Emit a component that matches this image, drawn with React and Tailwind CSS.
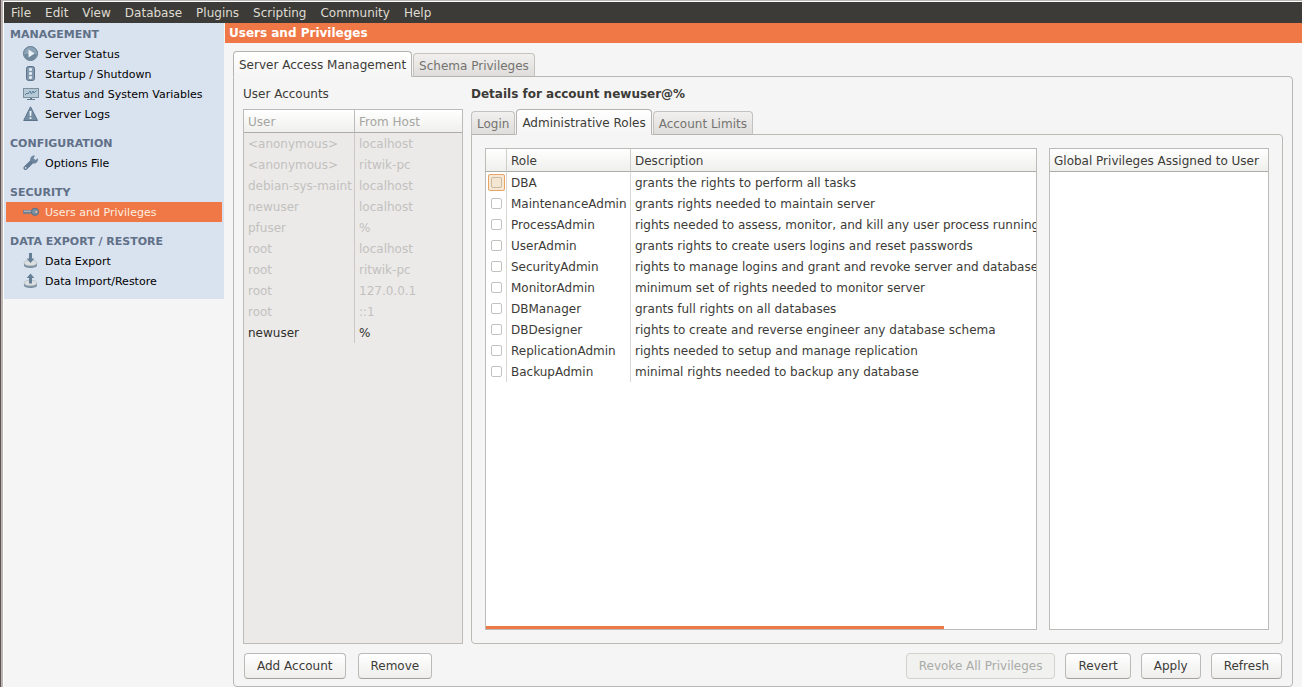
import React from 'react';
import clsx from 'clsx';

const MENUS = ['File', 'Edit', 'View', 'Database', 'Plugins', 'Scripting', 'Community', 'Help'];

const ICONS = {
  status: (
    <>
      <circle cx="7.500" cy="7.500" r="7" fill="#8ba3b5" stroke="#5f778c" />
      <path d="M1.500 8a6 6 0 0 0 12 0z" fill="#6f889c" />
      <path d="M5.500 3.500v8L11.500 7.500z" fill="#eaf2f8" />
    </>
  ),
  startup: (
    <>
      <rect x="3.500" y="0.500" width="8" height="14" rx="2" fill="#8298ac" stroke="#5c738b" />
      <rect x="6" y="2" width="3" height="3" rx="1" fill="#dfe9f1" />
      <rect x="6" y="6" width="3" height="3" rx="1" fill="#dfe9f1" />
      <rect x="6" y="10" width="3" height="3" rx="1" fill="#dfe9f1" />
    </>
  ),
  monitor: (
    <>
      <rect x="0.500" y="2.500" width="15" height="9" fill="#b5c9d6" stroke="#7b8f9f" />
      <path d="M2 9l2-2 1 1 2-3 1.500 3 1.500-3 1 2 2.500-2.500" fill="none" stroke="#5d7f99" />
      <path d="M7 12h2v1h3v1H4v-1h3z" fill="#64798c" />
    </>
  ),
  logs: (
    <>
      <path d="M7.500 .8L14.500 14.500H.7z" fill="#748da2" stroke="#5b748a" strokeLinejoin="round" />
      <path d="M6.500 5h2l-.3 5H6.800zM6.600 11.200h1.800V13H6.600z" fill="#edf4f9" />
    </>
  ),
  wrench: (
    <>
      <path d="M2.500 13L9 6.500" stroke="#637c95" strokeWidth="4" strokeLinecap="round" />
      <path d="M15 3.200L12.500 5l-2-1.700L12 .5C9.500 0 7 2 7.200 5l3 3.500c3 .4 5.300-2 4.800-5.300z" fill="#6d869e" />
      <circle cx="2.700" cy="12.800" r="0.900" fill="#d9e2ef" />
    </>
  ),
  key: (
    <>
      <path d="M0 6h9.500v3.500H6v.8H4.500v-.8H3v.8H1.500v-.8H0z" fill="#6f7f8d" />
      <path d="M1 7.200h9" stroke="#c3c6c8" />
      <circle cx="12" cy="7.800" r="3.600" fill="#7790a6" stroke="#586f85" />
      <circle cx="13.300" cy="7.800" r="1.100" fill="#f0b796" />
    </>
  ),
  export: (
    <>
      <path d="M1 10v2.500C1 14 4 15 7.500 15s6.500-1 6.500-2.500V10z" fill="#7b8fa0" />
      <ellipse cx="7.500" cy="10" rx="6.500" ry="2.800" fill="#dde0e0" stroke="#b3bcc2" strokeWidth="0.700" />
      <path d="M6 0h3v5.500h2.300L7.500 10 3.700 5.500H6z" fill="#647e95" />
    </>
  ),
  import: (
    <>
      <path d="M1 10v2.500C1 14 4 15 7.500 15s6.500-1 6.500-2.500V10z" fill="#7b8fa0" />
      <ellipse cx="7.500" cy="10" rx="6.500" ry="2.800" fill="#dde0e0" stroke="#b3bcc2" strokeWidth="0.700" />
      <path d="M6 10.500h3V5h2.300L7.500 .5 3.700 5H6z" fill="#647e95" />
    </>
  ),
};

const SECTIONS = [
  {
    title: 'MANAGEMENT',
    items: [
      ['status', 'Server Status'],
      ['startup', 'Startup / Shutdown'],
      ['monitor', 'Status and System Variables'],
      ['logs', 'Server Logs'],
    ],
  },
  { title: 'CONFIGURATION', items: [['wrench', 'Options File']] },
  { title: 'SECURITY', items: [['key', 'Users and Privileges']] },
  {
    title: 'DATA EXPORT / RESTORE',
    items: [
      ['export', 'Data Export'],
      ['import', 'Data Import/Restore'],
    ],
  },
];

const ACCOUNTS = [
  ['<anonymous>', 'localhost'],
  ['<anonymous>', 'ritwik-pc'],
  ['debian-sys-maint', 'localhost'],
  ['newuser', 'localhost'],
  ['pfuser', '%'],
  ['root', 'localhost'],
  ['root', 'ritwik-pc'],
  ['root', '127.0.0.1'],
  ['root', '::1'],
  ['newuser', '%'],
];

const ROLES = [
  ['DBA', 'grants the rights to perform all tasks'],
  ['MaintenanceAdmin', 'grants rights needed to maintain server'],
  ['ProcessAdmin', 'rights needed to assess, monitor, and kill any user process running'],
  ['UserAdmin', 'grants rights to create users logins and reset passwords'],
  ['SecurityAdmin', 'rights to manage logins and grant and revoke server and database'],
  ['MonitorAdmin', 'minimum set of rights needed to monitor server'],
  ['DBManager', 'grants full rights on all databases'],
  ['DBDesigner', 'rights to create and reverse engineer any database schema'],
  ['ReplicationAdmin', 'rights needed to setup and manage replication'],
  ['BackupAdmin', 'minimal rights needed to backup any database'],
];

function Tabs({ items, active }) {
  return (
    <div role="tablist" className="relative z-10 -mb-px flex items-end gap-px">
      {items.map((label) => (
        <button
          key={label}
          type="button"
          role="tab"
          aria-selected={label === active}
          className={clsx(
            'whitespace-nowrap rounded-t border px-[5px] pt-0.5',
            label === active
              ? 'h-[26px] border-[#b5b3ae] border-b-[#f5f5f5] bg-linear-to-b from-white to-[#f5f5f5] text-[#3c3b37]'
              : 'h-6 border-[#c4c2be] border-b-[#b5b3ae] bg-linear-to-b from-[#f1f0ef] to-[#dfdddb] text-[#74736f]',
          )}
        >
          {label}
        </button>
      ))}
    </div>
  );
}

function Button({ children, disabled }) {
  return (
    <button
      type="button"
      disabled={disabled}
      className={clsx(
        'h-[26px] whitespace-nowrap rounded border px-3',
        disabled
          ? 'border-[#d3d1cd] bg-[#f1f1f0] text-[#a9aba6]'
          : 'border-[#bcbab6] border-b-[#a3a19c] bg-linear-to-b from-white to-[#efeeed] text-[#3c3b37]',
      )}
    >
      {children}
    </button>
  );
}

function HeaderCell({ children, className, label }) {
  return (
    <th
      scope="col"
      aria-label={label}
      className={clsx(
        'h-[23px] border-b border-b-[#aeaca6] bg-linear-to-b from-white to-[#efefed] px-1 pt-0.5 pb-0 text-left font-normal',
        className,
      )}
    >
      {children}
    </th>
  );
}

function Sidebar() {
  return (
    <nav className="flex w-[220px] shrink-0 flex-col gap-[9px] self-start bg-[#d9e2ef] px-0.5 pt-px pb-2 text-[11px] leading-5">
      {SECTIONS.map((section) => (
        <section key={section.title}>
          <h2 className="h-5 px-1 pt-px font-bold text-[#5f7087]">{section.title}</h2>
          <ul>
            {section.items.map(([icon, label]) => (
              <li key={label}>
                <a
                  href="#"
                  className={clsx(
                    'flex h-5 items-center gap-1.5 whitespace-nowrap pl-[17px]',
                    icon === 'key' ? 'bg-[#f07746] text-[#fdeee0]' : 'text-black',
                  )}
                >
                  <svg viewBox="0 0 16 16" className="size-4 shrink-0" fill="none" aria-hidden="true">
                    {ICONS[icon]}
                  </svg>
                  <span className="pt-0.5">{label}</span>
                </a>
              </li>
            ))}
          </ul>
        </section>
      ))}
    </nav>
  );
}

function AccountsTable() {
  return (
    <div className="flex-1 border border-[#bdbbb8] bg-[#ebeae9]">
      <table className="w-full table-fixed border-separate border-spacing-0 whitespace-nowrap">
        <colgroup>
          <col className="w-[111px]" />
          <col />
        </colgroup>
        <thead className="text-[#a5a6a1]">
          <tr>
            <HeaderCell className="border-r border-r-[#bdbbb8]">User</HeaderCell>
            <HeaderCell>From Host</HeaderCell>
          </tr>
        </thead>
        <tbody>
          {ACCOUNTS.map(([user, host], i) => (
            <tr key={i} className={i === ACCOUNTS.length - 1 ? 'text-[#2f2e2b]' : 'text-[#c3c1be]'}>
              <td className="h-[21px] border-r border-[#cbc9c6] px-1 py-0">{user}</td>
              <td className="h-[21px] px-1 py-0">{host}</td>
            </tr>
          ))}
        </tbody>
      </table>
    </div>
  );
}

function RolesTable() {
  return (
    <div className="flex min-w-0 flex-1 flex-col justify-between overflow-hidden border border-[#bdbbb8] bg-white">
      <table className="w-full table-fixed border-separate border-spacing-0 whitespace-nowrap text-[#3c3b37]">
        <colgroup>
          <col className="w-[21px]" />
          <col className="w-[124px]" />
          <col />
        </colgroup>
        <thead>
          <tr>
            <HeaderCell label="Assigned" className="border-r border-r-[#cfcdc9]" />
            <HeaderCell className="border-r border-r-[#cfcdc9]">Role</HeaderCell>
            <HeaderCell>Description</HeaderCell>
          </tr>
        </thead>
        <tbody>
          {ROLES.map(([role, description], i) => (
            <tr key={role}>
              <td className="h-[21px] border-r border-[#d9d7d4] p-0">
                <span
                  className={clsx(
                    'mx-auto flex size-[17px] items-center justify-center rounded-xs border',
                    i === 0 ? 'border-[#e8a565] bg-[#f6e8d6]' : 'border-transparent',
                  )}
                >
                  <input
                    type="checkbox"
                    id={role}
                    className={clsx(
                      'size-[11px] appearance-none rounded-xs border',
                      i === 0 ? 'border-[#cdb99d] bg-[#f3e6d3]' : 'border-[#c4c2bf] bg-white',
                    )}
                  />
                </span>
              </td>
              <td className="h-[21px] border-r border-[#d9d7d4] px-1 py-0">
                <label htmlFor={role}>{role}</label>
              </td>
              <td className="h-[21px] overflow-hidden pl-1 pr-0 py-0">{description}</td>
            </tr>
          ))}
        </tbody>
      </table>
      <div className="h-[3px] w-5/6 bg-[#f07746]" />
    </div>
  );
}

export default function App() {
  return (
    <div className="flex min-h-screen flex-col bg-[#f5f5f5] font-['DejaVu_Sans',sans-serif] text-[12px] leading-4 text-[#3c3b37]">
      <div className="flex flex-1 border-l border-[#5d5257]">
        <div className="flex flex-1 flex-col border-t border-l-2 border-t-[#b9b7b4] border-l-[#bdb5b0]">
          <div className="flex flex-1 flex-col border-t border-l border-white">
            <header className="flex h-[21px] items-center bg-[#3c3b37] text-[#dfdbd2]">
              {MENUS.map((menu) => (
                <button key={menu} type="button" className="px-[7px]">
                  {menu}
                </button>
              ))}
            </header>
            <div className="flex flex-1 gap-px">
              <Sidebar />
              <main className="flex min-w-0 flex-1 flex-col">
                <h1 className="h-5 bg-[#f07746] px-1 font-bold leading-5 text-white">Users and Privileges</h1>
                <div className="flex flex-1 flex-col pt-2 pr-[9px] pl-2">
                  <Tabs items={['Server Access Management', 'Schema Privileges']} active="Server Access Management" />
                  <div className="flex flex-1 flex-col gap-[9px] rounded-b rounded-tr border border-[#b9b7b3] px-[9px] pt-[9px] pb-[7px]">
                    <div className="flex flex-1 gap-2">
                      <section className="flex w-[220px] shrink-0 flex-col gap-[7px]">
                        <h2>User Accounts</h2>
                        <AccountsTable />
                      </section>
                      <section className="flex min-w-0 flex-1 flex-col gap-[7px]">
                        <h2 className="font-bold">Details for account newuser@%</h2>
                        <div className="flex flex-1 flex-col">
                          <Tabs items={['Login', 'Administrative Roles', 'Account Limits']} active="Administrative Roles" />
                          <div className="flex flex-1 gap-3 rounded-b rounded-tr border border-[#bdbab6] p-[13px]">
                            <RolesTable />
                            <div className="w-[220px] shrink-0 border border-[#bdbbb8] bg-white">
                              <table className="w-full table-fixed border-separate border-spacing-0 whitespace-nowrap">
                                <thead>
                                  <tr>
                                    <HeaderCell>Global Privileges Assigned to User</HeaderCell>
                                  </tr>
                                </thead>
                              </table>
                            </div>
                          </div>
                        </div>
                      </section>
                    </div>
                    <div className="flex justify-between px-px">
                      <div className="flex gap-3">
                        <Button>Add Account</Button>
                        <Button>Remove</Button>
                      </div>
                      <div className="flex gap-2.5">
                        <Button disabled>Revoke All Privileges</Button>
                        <Button>Revert</Button>
                        <Button>Apply</Button>
                        <Button>Refresh</Button>
                      </div>
                    </div>
                  </div>
                </div>
              </main>
            </div>
          </div>
        </div>
      </div>
    </div>
  );
}
